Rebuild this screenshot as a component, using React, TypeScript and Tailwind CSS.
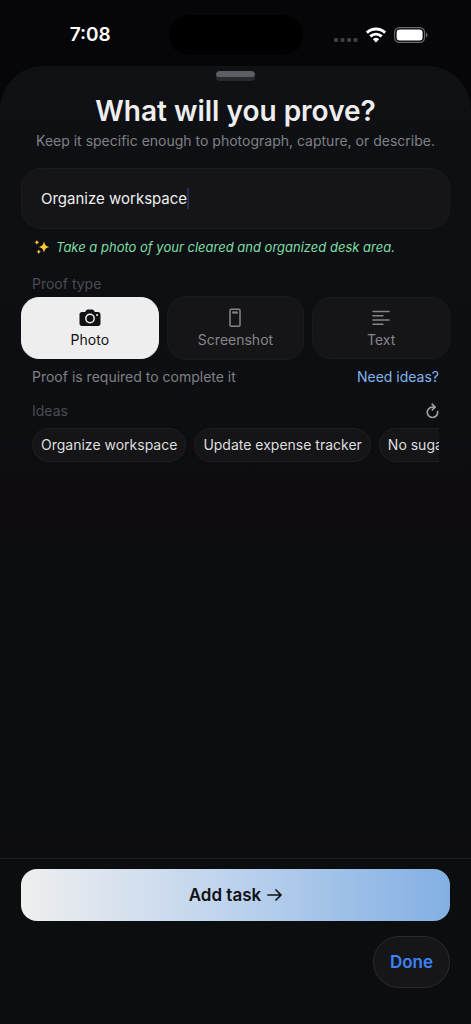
import { useState } from "react";
import type { ReactNode } from "react";

const HINT = "Take a photo of your cleared and organized desk area.";
const IDEAS = ["Organize workspace", "Update expense tracker", "No sugar today"];

type ProofType = "photo" | "screenshot" | "text";

function StatusBar() {
  return (
    <header className="grid h-[66px] grid-cols-[1fr_134px_1fr] items-center pt-1">
      <span className="ml-3 justify-self-center text-[19px] font-semibold text-white">7:08</span>
      <span className="h-10 rounded-full bg-black" />
      <div className="flex items-center justify-end gap-2 pr-[43px]">
        <svg className="mt-2.5 h-1 w-6" viewBox="0 0 24 4" fill="#3f3f42" aria-hidden="true">
          <rect x="0" width="4" height="4" rx="1.3" />
          <rect x="6.5" width="4" height="4" rx="1.3" />
          <rect x="13" width="4" height="4" rx="1.3" />
          <rect x="19.5" width="4" height="4" rx="1.3" />
        </svg>
        <svg className="h-4 w-5" viewBox="0 0 20 16" fill="none" stroke="white" strokeWidth="2.9" aria-hidden="true">
          <path d="M.9 5.7a13.2 13.2 0 0 1 18.2 0" />
          <path d="M4.3 9.4a8.2 8.2 0 0 1 11.4 0" />
          <path d="M10 15.4 6.9 12.2a4.6 4.6 0 0 1 6.2 0Z" fill="white" stroke="none" />
        </svg>
        <svg className="h-4 w-[34px]" viewBox="0 0 34 16" fill="none" aria-hidden="true">
          <rect x=".6" y=".6" width="30" height="14.8" rx="4.8" stroke="#6b6b6d" strokeWidth="1.1" />
          <rect x="2.6" y="2.6" width="26" height="10.8" rx="3" fill="white" />
          <path d="M32 5.4c1.9.8 1.9 4.4 0 5.2Z" fill="#6b6b6d" />
        </svg>
      </div>
    </header>
  );
}

function SparklesIcon() {
  return (
    <svg className="h-4 w-4 shrink-0" viewBox="0 0 16 16" fill="#fbc936" aria-hidden="true">
      <path d="M10 2c.8 4.100 1.700 5.200 5.600 6-3.900.8-4.800 1.900-5.600 6-.8-4.100-1.700-5.200-5.600-6 3.900-.8 4.800-1.900 5.600-6Z" />
      <path d="M2.900.8c.4 1.700.9 2.200 2.500 2.600-1.600.4-2.100.9-2.500 2.600C2.500 4.300 2 3.800.4 3.400 2 3 2.500 2.500 2.900.8Z" />
      <path d="M4.800 10.200c.4 1.600.9 2.100 2.400 2.500-1.500.4-2 .9-2.400 2.500-.4-1.600-.9-2.100-2.400-2.500 1.500-.4 2-.9 2.400-2.500Z" />
    </svg>
  );
}

function CameraIcon() {
  return (
    <svg className="h-[18px] w-[22px]" viewBox="0 0 22 18" aria-hidden="true">
      <path
        fill="currentColor"
        d="M3 3h3.100l1.200-1.700C7.700.7 8.100.5 8.700.5h4.600c.6 0 1 .2 1.400.8L15.900 3H19c1.500 0 2.500 1 2.500 2.500v9c0 1.500-1 2.500-2.500 2.500H3C1.500 17 .5 16 .5 14.500v-9C.5 4 1.500 3 3 3Z"
      />
      <circle cx="11" cy="9.500" r="4.200" fill="none" stroke="#eeeeef" strokeWidth="1.500" />
      <circle cx="18" cy="6" r="1" fill="#eeeeef" />
    </svg>
  );
}

function PhoneIcon() {
  return (
    <svg className="h-5 w-3" viewBox="0 0 12 20" fill="none" stroke="currentColor" strokeWidth="1.500" aria-hidden="true">
      <rect x="1" y="1.200" width="10" height="17" rx="1.300" />
      <path d="M3.200 4.500h5.600" strokeWidth="2.200" />
    </svg>
  );
}

function LinesIcon() {
  return (
    <svg className="h-4 w-[18px]" viewBox="0 0 18 16" stroke="currentColor" strokeWidth="1.500" strokeLinecap="round" aria-hidden="true">
      <path d="M1 1.500h16M1 5.700h10M1 10h16M1 14.300h10" />
    </svg>
  );
}

function RefreshIcon() {
  return (
    <svg className="h-4 w-[13px]" viewBox="0 0 13 16" fill="none" stroke="currentColor" strokeWidth="1.700" strokeLinecap="round" strokeLinejoin="round" aria-hidden="true">
      <path d="M11.600 8.700A5.200 5.200 0 1 1 6.400 4.100h2.400" />
      <path d="M6.200 1.200 9.100 4.100 6.200 7" />
    </svg>
  );
}

function ArrowIcon() {
  return (
    <svg className="h-3 w-[15px]" viewBox="0 0 15 12" fill="none" stroke="currentColor" strokeWidth="1.700" strokeLinecap="round" strokeLinejoin="round" aria-hidden="true">
      <path d="M1 6h13M9 1l5 5-5 5" />
    </svg>
  );
}

const PROOF_TYPES: { id: ProofType; label: string; icon: ReactNode; size: string }[] = [
  { id: "photo", label: "Photo", icon: <CameraIcon />, size: "h-[62px]" },
  { id: "screenshot", label: "Screenshot", icon: <PhoneIcon />, size: "h-16" },
  { id: "text", label: "Text", icon: <LinesIcon />, size: "h-[62px]" },
];

export default function App() {
  const [task, setTask] = useState("Organize workspace");
  const [proof, setProof] = useState<ProofType>("photo");

  return (
    <div className="flex min-h-screen flex-col bg-[#060608] font-[Inter,sans-serif] text-sm text-[#eeeeef]">
      <StatusBar />
      <main className="flex flex-1 flex-col rounded-t-[44px] bg-[linear-gradient(#101115,#0d0f13_10%,#0c0e12_38%,#0e0b10_45%,#0b0d0f_53%,#0b0d0f_75%,#0c0c0e_82%)]">
        <div className="mx-auto mt-[5px] h-[10px] w-[39px] overflow-hidden rounded-sm bg-[#29292e]">
          <div className="h-1.5 rounded-sm bg-[#5d5d66]" />
        </div>

        <div className="mt-2.5 px-5 text-center">
          <h1 className="text-[28px] leading-10 font-semibold">What will you prove?</h1>
          <p className="leading-5 text-[#808084]">Keep it specific enough to photograph, capture, or describe.</p>
        </div>

        <div className="mt-[17px] px-[21px]">
          <label className="flex h-[61px] items-center rounded-[20px] border border-[#1b1b1e] bg-[#151517] px-[19px]">
            <input
              aria-label="Task"
              className="max-w-full field-sizing-content bg-transparent text-[15px] outline-none"
              value={task}
              onChange={(e) => setTask(e.target.value)}
            />
            <span className="h-[21px] w-0.5 bg-[#1b3158]" />
          </label>
        </div>

        <p className="mt-2 flex items-center gap-1.5 px-[34px] text-[13px] leading-5 text-[#7fdfa3] italic">
          <SparklesIcon />
          {HINT}
        </p>

        <h2 className="mt-[17px] px-8 leading-5 text-[#4b4b50]">Proof type</h2>
        <div className="mt-0.5 grid grid-cols-3 items-center gap-2 px-[21px]">
          {PROOF_TYPES.map(({ id, label, icon, size }) => (
            <button
              key={id}
              type="button"
              aria-pressed={proof === id}
              onClick={() => setProof(id)}
              className={`flex flex-col items-center justify-center rounded-[18px] border ${size} ${
                proof === id
                  ? "border-[#eeeeef] bg-[#eeeeef] text-[#111113]"
                  : "border-[#1a1a1d] bg-[#151517] text-[#858489]"
              }`}
            >
              <span className="flex h-6 items-center">{icon}</span>
              <span className="leading-5">{label}</span>
            </button>
          ))}
        </div>

        <div className="mt-[7px] flex justify-between px-8 leading-5">
          <p className="text-[#808084]">Proof is required to complete it</p>
          <button type="button" className="text-[#84b4ec]">Need ideas?</button>
        </div>

        <div className="mt-3.5 flex items-center justify-between px-8 leading-5">
          <h2 className="text-[#4b4b50]">Ideas</h2>
          <button type="button" aria-label="Refresh ideas" className="text-[#a0a0a4]">
            <RefreshIcon />
          </button>
        </div>

        <div className="mx-8 mt-[7px] flex gap-2 overflow-hidden">
          {IDEAS.map((idea) => (
            <button
              key={idea}
              type="button"
              onClick={() => setTask(idea)}
              className="h-[34px] shrink-0 rounded-full border border-[#1f1f22] bg-[#151517] px-2 whitespace-nowrap text-[#dededf]"
            >
              {idea}
            </button>
          ))}
        </div>

        <footer className="mt-auto flex flex-col items-end gap-[15px] border-t border-[#202124] bg-[#0c0d0f] px-[21px] pt-2.5 pb-9">
          <button
            type="button"
            className="flex h-[52px] w-full items-center justify-center gap-1.5 rounded-[16px] bg-linear-to-r from-[#efefef] via-[#bcd2ed] to-[#82afe3] text-[17px] font-semibold text-[#111113]"
          >
            Add task
            <ArrowIcon />
          </button>
          <button
            type="button"
            className="h-[52px] rounded-full border border-[#2b2b2e] bg-[#161618] px-4 text-[17px] font-semibold text-[#3c82f6]"
          >
            Done
          </button>
        </footer>
      </main>
    </div>
  );
}
